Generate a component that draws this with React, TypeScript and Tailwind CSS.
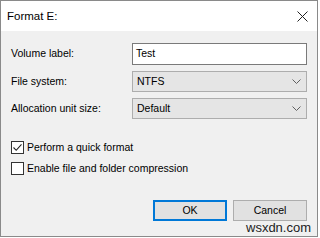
import React from 'react';

const font = { fontFamily: '"Liberation Sans", Arial, sans-serif' };

function Chevron() {
  return (
    <svg width="9" height="5" viewBox="0 0 9 5" className="shrink-0">
      <path d="M0.5 0.5 L4.5 4.5 L8.5 0.5" fill="none" stroke="#606060" strokeWidth="1" />
    </svg>
  );
}

function Select({ value }: { value: string }) {
  return (
    <div className="flex items-center justify-between w-[175px] h-[21px] bg-[#e5e5e5] border border-[#adadad] pl-[4px] pr-[5px] text-[10.5px] text-black">
      <span>{value}</span>
      <Chevron />
    </div>
  );
}

function Check({ checked, label }: { checked?: boolean; label: string }) {
  return (
    <div className="flex items-center gap-[3px] h-[13px]">
      <div className="w-[13px] h-[13px] border border-[#333333] bg-white flex items-center justify-center">
        {checked && (
          <svg width="11" height="11" viewBox="0 0 11 11">
            <path d="M1.5 5.5 L4.2 8.3 L9.5 2.3" fill="none" stroke="#222" strokeWidth="1.1" />
          </svg>
        )}
      </div>
      <span className="text-[10.5px] text-black leading-none">{label}</span>
    </div>
  );
}

export default function App() {
  return (
    <div className="relative w-[320px] h-[238px] bg-white" style={font}>
      <div className="flex flex-col w-[318px] h-[237px] border border-[#8a8a8a]">
        {/* title bar */}
        <div className="flex items-center justify-between h-[30px] bg-white pl-[6px] pr-[9px] pt-[1px]">
          <span className="text-[11.5px] text-black">Format E:</span>
          <svg width="11" height="11" viewBox="0 0 11 11">
            <path d="M0.5 0.5 L10.5 10.5 M10.5 0.5 L0.5 10.5" stroke="#222" strokeWidth="1" />
          </svg>
        </div>

        {/* body */}
        <div className="flex-1 flex flex-col bg-[#f0f0f0] pl-[10px] pr-[10px] pt-[12px]">
          <div className="flex flex-col gap-[6px]">
            <div className="flex items-center justify-between">
              <span className="text-[10.5px] text-black">Volume label:</span>
              <div className="flex items-center w-[175px] h-[22px] bg-white border border-[#7a7a7a] pl-[3px] text-[10.5px] text-black">
                Test
              </div>
            </div>
            <div className="flex items-center justify-between">
              <span className="text-[10.5px] text-black">File system:</span>
              <Select value="NTFS" />
            </div>
            <div className="flex items-center justify-between">
              <span className="text-[10.5px] text-black">Allocation unit size:</span>
              <Select value="Default" />
            </div>
          </div>

          <div className="flex flex-col gap-[8px] mt-[22px]">
            <Check checked label="Perform a quick format" />
            <Check label="Enable file and folder compression" />
          </div>

          <div className="flex justify-end gap-[6px] mt-[25px]">
            <button className="w-[74px] h-[21px] bg-[#e1e1e1] border-2 border-[#0078d7] text-[10.5px] text-black">
              OK
            </button>
            <button className="w-[74px] h-[21px] bg-[#e1e1e1] border border-[#adadad] text-[10.5px] text-black">
              Cancel
            </button>
          </div>
        </div>
      </div>

      {/* watermark */}
      <span className="absolute left-[246px] top-[221px] text-[13px] text-[#222] leading-none">wsxdn.com</span>
    </div>
  );
}
